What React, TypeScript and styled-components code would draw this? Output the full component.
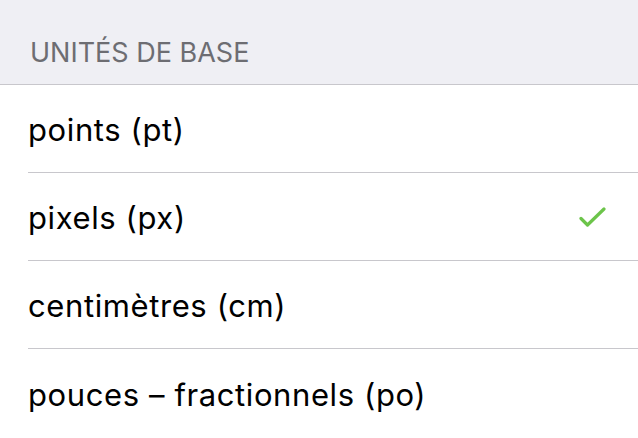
import React from "react";
import styled, { createGlobalStyle } from "styled-components";

const Global = createGlobalStyle`
  html, body { margin: 0; padding: 0; background: #ffffff; }
  body { font-family: Inter, "Liberation Sans", Arial, sans-serif; -webkit-font-smoothing: antialiased; }
`;

const Page = styled.div`
  width: 638px;
  height: 438px;
  overflow: hidden;
  background: #ffffff;
  display: flex;
  flex-direction: column;
`;

const SectionHeader = styled.div`
  height: 85px;
  background: #efeff4;
  border-bottom: 1px solid #c8c7cc;
  box-sizing: border-box;
  display: flex;
  align-items: flex-end;
  padding: 0 0 15px 30px;
  font-size: 27px;
  color: #6d6d72;
`;

const List = styled.ul`
  list-style: none;
  margin: 0;
  padding: 0 0 0 28px;
`;

const Row = styled.li<{ $last?: boolean }>`
  height: 88px;
  box-sizing: border-box;
  display: flex;
  align-items: center;
  justify-content: space-between;
  padding-right: 32px;
  border-bottom: ${(p) => (p.$last ? "none" : "1px solid #c8c7cc")};
  font-size: 31px;
  letter-spacing: 0.6px;
  color: #000000;
`;

const Label = styled.span`
  padding-top: 2px;
`;

const Check = styled.svg`
  width: 27px;
  height: 22px;
`;

const items = [
  { label: "points (pt)", selected: false },
  { label: "pixels (px)", selected: true },
  { label: "centimètres (cm)", selected: false },
  { label: "pouces – fractionnels (po)", selected: false },
];

export default function App() {
  return (
    <Page>
      <Global />
      <SectionHeader>UNITÉS DE BASE</SectionHeader>
      <List>
        {items.map((it, i) => (
          <Row key={it.label} $last={i === items.length - 1}>
            <Label>{it.label}</Label>
            {it.selected && (
              <Check viewBox="0 0 27 22">
                <path
                  d="M2 12.5 L8.5 19 L25 3"
                  fill="none"
                  stroke="#6cc44a"
                  strokeWidth="3.2"
                  strokeLinecap="round"
                  strokeLinejoin="round"
                />
              </Check>
            )}
          </Row>
        ))}
      </List>
    </Page>
  );
}
